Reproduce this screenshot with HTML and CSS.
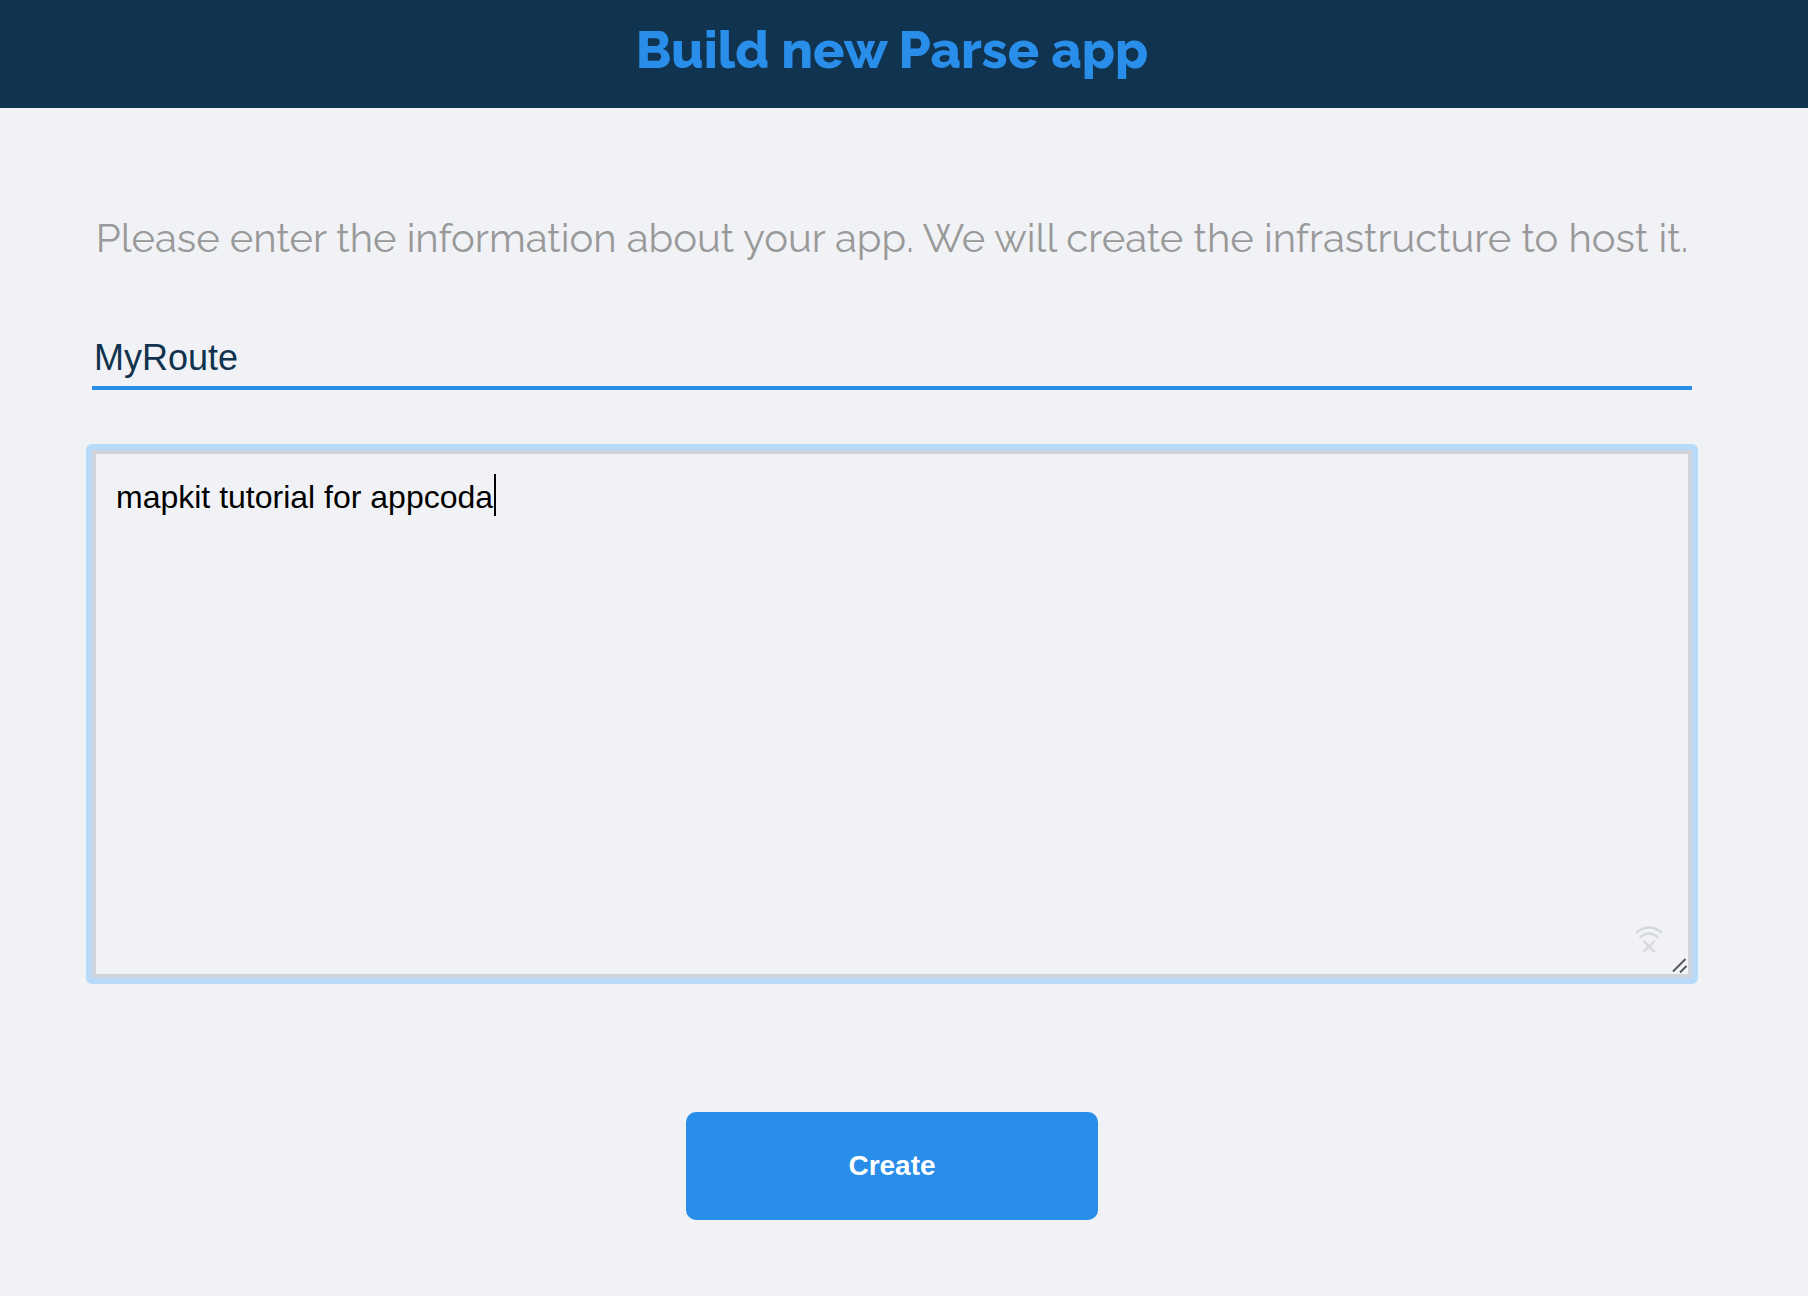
FILE: index.html
```html
<!DOCTYPE html>
<html lang="en">
<head>
<meta charset="utf-8">
<meta name="viewport" content="width=device-width, initial-scale=1">
<title>Build new Parse app</title>
<link rel="stylesheet" href="styles.css">
</head>
<body>
<header class="header">
  <h1 class="title">Build new Parse app</h1>
</header>
<main class="content">
  <form class="form">
    <p class="intro">Please enter the information about your app. We will create the infrastructure to host it.</p>
    <input class="name-input" type="text" aria-label="App name" value="MyRoute">
    <div class="description">
      <textarea class="description-input" aria-label="Description" spellcheck="false">mapkit tutorial for appcoda</textarea>
      <span class="caret"></span>
      <svg class="offline" viewBox="0 0 28 28" width="28" height="28" fill="none" stroke="#d6d8d9" stroke-width="2.400" stroke-linecap="round" aria-hidden="true">
        <path d="M2 6Q14 -3 26 6M5.500 11Q14 4 22.500 11M9 15.500L19 25.500M19 15.500L9 25.500"/>
      </svg>
      <svg class="grip" viewBox="0 0 16 16" width="16" height="16" fill="none" aria-hidden="true">
        <path stroke="#fff" stroke-width="1" d="M3 15.500L15 3.500M10 15.500L15.500 10"/>
        <path stroke="#58595b" stroke-width="2" d="M1 13.500L13.500 1M8 14.500L14.500 8"/>
      </svg>
    </div>
    <button class="create" type="button">Create</button>
  </form>
</main>
</body>
</html>
```
FILE: styles.css
```css
* {
  box-sizing: border-box;
}

body {
  margin: 0;
  background: #f0f2f6;
  font-family: "Liberation Sans", Arial, sans-serif;
}

.header {
  padding: 16px 24px 24px 0;
  background: #10334f;
  text-align: center;
}

.title {
  margin: 0;
  color: #298dea;
  font: 800 52px/68px Raleway, Lato, sans-serif;
}

.content {
  padding: 104px 116px 76px 92px;
}

.form {
  display: flex;
  flex-direction: column;
}

.intro {
  margin: 0 0 72px;
  color: #999;
  font: 400 40px/52px Raleway, Lato, sans-serif;
  text-align: center;
}

.name-input {
  width: 100%;
  height: 54px;
  margin-bottom: 54px;
  padding: 0 2px 6px;
  border: 0;
  border-bottom: 4px solid #298dea;
  outline: 0;
  background: transparent;
  color: #11334e;
  font: 36px/44px "Liberation Sans", Arial, sans-serif;
}

.description {
  position: relative;
  margin: 0 -6px 128px;
  border: 6px solid #b7daf9;
  border-radius: 6px;
}

.description-input {
  display: block;
  width: 100%;
  height: 528px;
  padding: 24px 20px;
  border: 4px solid #ced4d9;
  border-radius: 0;
  outline: 0;
  background: transparent;
  color: #000;
  font: 32px/38px "Liberation Sans", Arial, sans-serif;
  resize: none;
}

.caret {
  position: absolute;
  top: 24px;
  left: 402px;
  width: 2px;
  height: 42px;
  background: #000;
}

.offline {
  position: absolute;
  right: 29px;
  bottom: 24px;
}

.grip {
  position: absolute;
  right: 4px;
  bottom: 4px;
}

.create {
  align-self: center;
  width: 412px;
  height: 108px;
  border: 0;
  border-radius: 10px;
  background: #298dea;
  color: #fff;
  font: bold 28px/32px "Liberation Sans", Arial, sans-serif;
}
```
